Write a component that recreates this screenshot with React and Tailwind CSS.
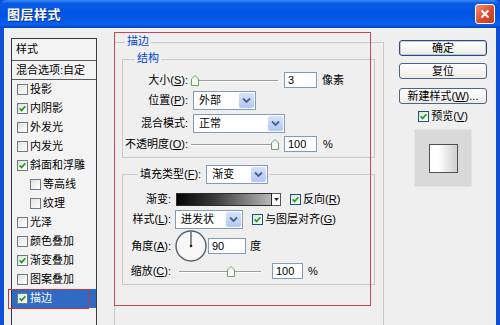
import React from "react";

const effects = [
  { name: "投影", on: false },
  { name: "内阴影", on: true },
  { name: "外发光", on: false },
  { name: "内发光", on: false },
  { name: "斜面和浮雕", on: true },
  { name: "等高线", on: false, sub: true },
  { name: "纹理", on: false, sub: true },
  { name: "光泽", on: false },
  { name: "颜色叠加", on: false },
  { name: "渐变叠加", on: true },
  { name: "图案叠加", on: false },
  { name: "描边", on: true, active: true },
];

function Check({ on = true, gray = false }) {
  return (
    <span
      className={
        "w-[11px] h-[11px] border flex items-center justify-center shrink-0 bg-[linear-gradient(135deg,#e2e2dc,#ffffff)] " +
        (gray ? "border-[#707a86]" : "border-[#1c5180]")
      }
    >
      {on && (
        <svg width="7" height="7" viewBox="0 0 7 7">
          <path d="M0.6 3.4 L2.6 5.4 L6.4 1.2" fill="none" stroke="#21a121" strokeWidth="1.7" />
        </svg>
      )}
    </span>
  );
}

function Select({ w, value }) {
  return (
    <div className={"h-[19px] flex border border-[#7f9db9] bg-white shrink-0 " + w}>
      <span className="flex-1 pl-[5px] flex items-center">{value}</span>
      <span className="w-[15px] m-px rounded-[2px] bg-[linear-gradient(#d6e2fd,#b2c7f6)] flex items-center justify-center">
        <svg width="9" height="7" viewBox="0 0 9 7">
          <path d="M1 1.5 L4.5 5 L8 1.5" fill="none" stroke="#4d6185" strokeWidth="1.8" />
        </svg>
      </span>
    </div>
  );
}

function Field({ w, value }) {
  return (
    <div className={"h-[16px] border border-[#7f9db9] bg-white px-[3px] flex items-center shrink-0 " + w}>
      {value}
    </div>
  );
}

// track + little house-shaped thumb
function Slider({ width, pos }) {
  return (
    <svg width={width} height="14" className="block shrink-0">
      <line x1="1" y1="7.5" x2={width - 1} y2="7.5" stroke="#9c9c9c" />
      <line x1="1" y1="8.5" x2={width - 1} y2="8.5" stroke="#ffffff" />
      <path
        d={`M${pos - 3.5} 12.5 V6 L${pos} 2.5 L${pos + 3.5} 6 V12.5 Z`}
        fill="#f6fdf2"
        stroke="#6e9c6e"
      />
    </svg>
  );
}

function Dial() {
  return (
    <svg width="32" height="32" viewBox="0 0 32 32" className="block shrink-0">
      <circle cx="16" cy="16" r="15" fill="#f8f8f8" stroke="#55606c" strokeWidth="1.4" />
      <line x1="16" y1="16" x2="16" y2="2" stroke="#222" strokeWidth="1" />
      <circle cx="16" cy="16" r="1.3" fill="#222" />
    </svg>
  );
}

function Button({ children, def }) {
  return (
    <div
      className={
        "w-[88px] h-[16px] rounded-[3px] flex items-center justify-center bg-[linear-gradient(#ffffff,#ecebe6)] " +
        (def ? "border border-[#2b4e78] shadow-[inset_0_0_0_1px_#b9cbe8]" : "border border-[#4a6585]")
      }
    >
      {children}
    </div>
  );
}

export default function App() {
  return (
    <div className="w-[500px] h-[325px] overflow-hidden flex flex-col bg-[#0a4fd6] text-[11px] leading-[13px] text-black font-['Liberation_Sans','Noto_Sans_CJK_SC',sans-serif]">
      {/* title bar */}
      <div className="h-[28px] shrink-0 flex items-center justify-between pl-[7px] pr-[5px] rounded-t-[6px] bg-[linear-gradient(#3b8cf5_0%,#0a5ae4_12%,#0054e3_50%,#0a5fec_88%,#0342c8_100%)]">
        <span className="text-white font-bold text-[13px] leading-none tracking-[0.5px] [text-shadow:1px_1px_0_#0a2f8a]">
          图层样式
        </span>
        <div className="w-[20px] h-[20px] rounded-[3px] border border-white bg-[linear-gradient(135deg,#f09070,#d9472a_60%,#c23a1e)] flex items-center justify-center">
          <svg width="10" height="10" viewBox="0 0 10 10">
            <path d="M1.5 1.5 L8.5 8.5 M8.5 1.5 L1.5 8.5" stroke="#fff" strokeWidth="2" />
          </svg>
        </div>
      </div>

      <div className="flex-1 mx-[4px] bg-[#efefef] flex relative">
        {/* style list */}
        <div className="ml-[7px] mt-[10px] w-[86px] h-[300px] shrink-0 border border-[#3a3a3a] bg-[#f3f3f3] flex flex-col">
          <div className="h-[22px] pl-[4px] flex items-center border-b border-[#5a5a5a]">样式</div>
          <div className="h-[19px] pl-[4px] flex items-center border-b border-[#5a5a5a]">混合选项:自定</div>
          {effects.map((e) => (
            <div
              key={e.name}
              className={
                "h-[19px] flex items-center gap-[2px] " +
                (e.sub ? "pl-[18px] " : "pl-[5px] ") +
                (e.active ? "bg-[#316ac5] text-white" : "")
              }
            >
              <Check on={e.on} gray />
              <span>{e.name}</span>
            </div>
          ))}
        </div>

        {/* stroke settings */}
        <fieldset className="ml-[17px] mt-[7px] w-[270px] h-[320px] shrink-0 border border-[#c9c9c9]">
          <legend className="ml-[10px] px-[2px] h-[14px] text-[#0046d5]">描边</legend>

          <fieldset className="ml-[7px] mt-[3px] w-[253px] border border-[#c9c9c9] pb-[5px]">
            <legend className="ml-[12px] px-[2px] h-[14px] text-[#0046d5]">结构</legend>
            <div className="mt-[6px] h-[16px] flex items-center">
              <span className="w-[65px] text-right">大小(<u>S</u>):</span>
              <span className="ml-[2px]">
                <Slider width={89} pos={5} />
              </span>
              <span className="ml-[5px]">
                <Field w="w-[33px]" value="3" />
              </span>
              <span className="ml-[5px]">像素</span>
            </div>
            <div className="mt-[3px] flex items-center">
              <span className="w-[65px] text-right">位置(<u>P</u>):</span>
              <span className="ml-[5px]">
                <Select w="w-[63px]" value="外部" />
              </span>
            </div>
            <div className="mt-[4px] flex items-center">
              <span className="w-[65px] text-right">混合模式:</span>
              <span className="ml-[5px]">
                <Select w="w-[92px]" value="正常" />
              </span>
            </div>
            <div className="mt-[3px] h-[16px] flex items-center">
              <span className="w-[65px] text-right">不透明度(<u>O</u>):</span>
              <span className="ml-[2px]">
                <Slider width={89} pos={85} />
              </span>
              <span className="ml-[5px]">
                <Field w="w-[33px]" value="100" />
              </span>
              <span className="ml-[6px]">%</span>
            </div>
          </fieldset>

          <fieldset className="ml-[7px] mt-[7px] w-[253px] border border-[#c9c9c9] pb-[5px]">
            <legend className="ml-[15px] px-[2px]">
              <div className="inline-flex items-center gap-[5px]">
                <span>填充类型(<u>F</u>):</span>
                <Select w="w-[62px]" value="渐变" />
              </div>
            </legend>
            <div className="mt-[9px] h-[13px] flex items-center">
              <span className="w-[48px] text-right">渐变:</span>
              <div className="ml-[5px] w-[96px] h-[13px] border border-[#2a2a2a] bg-[linear-gradient(to_right,#050505,#3a3a3a_40%,#b8b8b8)]" />
              <div className="w-[9px] h-[13px] border border-[#555] border-l-0 bg-white flex items-center justify-center">
                <svg width="5" height="3" viewBox="0 0 5 3">
                  <path d="M0 0 H5 L2.5 3 Z" fill="#222" />
                </svg>
              </div>
              <span className="ml-[9px]">
                <Check />
              </span>
              <span className="ml-[2px]">反向(<u>R</u>)</span>
            </div>
            <div className="mt-[4px] flex items-center">
              <span className="w-[48px] text-right">样式(<u>L</u>):</span>
              <span className="ml-[4px]">
                <Select w="w-[68px]" value="迸发状" />
              </span>
              <span className="ml-[9px]">
                <Check />
              </span>
              <span className="ml-[2px]">与图层对齐(<u>G</u>)</span>
            </div>
            <div className="mt-[1px] h-[32px] flex items-center">
              <span className="w-[48px] text-right">角度(<u>A</u>):</span>
              <span className="ml-[4px]">
                <Dial />
              </span>
              <span className="ml-[1px]">
                <Field w="w-[38px]" value="90" />
              </span>
              <span className="ml-[4px]">度</span>
            </div>
            <div className="mt-[1px] h-[16px] flex items-center">
              <span className="w-[48px] text-right">缩放(<u>C</u>):</span>
              <span className="ml-[7px]">
                <Slider width={84} pos={53} />
              </span>
              <span className="ml-[10px]">
                <Field w="w-[31px]" value="100" />
              </span>
              <span className="ml-[5px]">%</span>
            </div>
          </fieldset>
        </fieldset>

        {/* buttons + preview */}
        <div className="ml-[15px] mt-[12px] w-[88px] flex flex-col items-center">
          <Button def>确定</Button>
          <div className="mt-[7px]">
            <Button>复位</Button>
          </div>
          <div className="mt-[9px]">
            <Button>
              新建样式(<u>W</u>)...
            </Button>
          </div>
          <div className="mt-[6px] flex items-center gap-[2px]">
            <Check />
            <span>预览(<u>V</u>)</span>
          </div>
          <div className="mt-[6px] w-[58px] h-[58px] border border-[#e4e4e4] bg-[#d9d9d9] flex items-center justify-center">
            <div className="w-[29px] h-[29px] border border-[#505050] bg-[linear-gradient(to_right,#ffffff_30%,#cfcfcf)]" />
          </div>
        </div>

        {/* red annotation boxes */}
        <div className="absolute left-[110px] top-[4px] w-[257px] h-[274px] border border-[#c04a58] pointer-events-none" />
        <div className="absolute left-[4px] top-[261px] w-[81px] h-[20px] border border-[#c03838] pointer-events-none" />
      </div>
    </div>
  );
}
